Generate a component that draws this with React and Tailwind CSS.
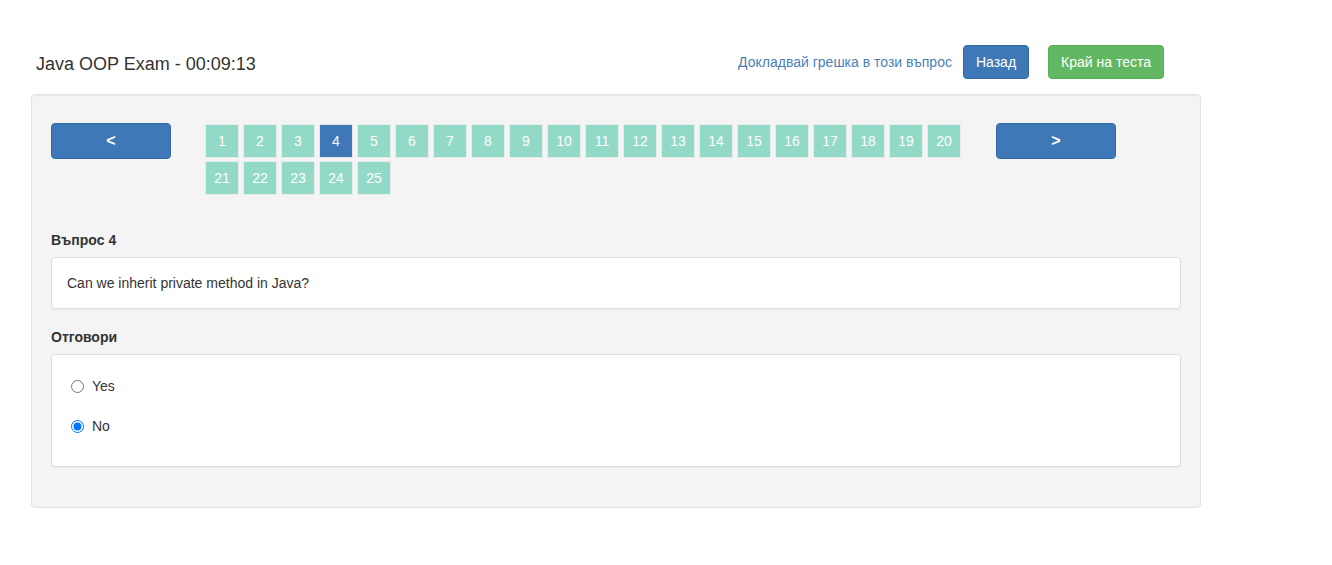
import React, { useState } from 'react';

const font = { fontFamily: '"Liberation Sans", Arial, Helvetica, sans-serif' };

function App() {
  const [current, setCurrent] = useState(4);
  const [answer, setAnswer] = useState('no');
  const numbers = Array.from({ length: 25 }, (_, i) => i + 1);

  return (
    <div className="min-h-screen bg-white text-[#333] text-[14px]" style={font}>
      <div className="pt-[45px] pl-[31px] w-[1201px]">
        {/* Header */}
        <div className="flex items-center justify-between pr-[37px]">
          <h1 className="pl-[5px] pt-[3px] text-[18px] leading-[20px] text-[#333]">
            Java OOP Exam - 00:09:13
          </h1>
          <div className="flex items-center">
            <a href="#" className="text-[#4a7fb8] text-[14px] leading-[20px] mr-[11px]">
              Докладвай грешка в този въпрос
            </a>
            <button className="h-[34px] px-[12px] rounded-[4px] bg-[#3f78b6] border border-[#2f6aa6] text-white text-[14px] mr-[19px]">
              Назад
            </button>
            <button className="h-[34px] px-[12px] rounded-[4px] bg-[#62b862] border border-[#55ae55] text-white text-[14px]">
              Край на теста
            </button>
          </div>
        </div>

        {/* Panel */}
        <div className="mt-[15px] bg-[#f4f4f4] border border-[#e3e3e3] rounded-[4px] shadow-[inset_0_1px_1px_rgba(0,0,0,0.05)] px-[19px] pt-[28px] pb-[40px]">
          <div className="flex items-start">
            <button
              onClick={() => setCurrent(Math.max(1, current - 1))}
              className="w-[120px] h-[36px] rounded-[4px] bg-[#3f78b6] border border-[#2f6aa6] text-white font-bold text-[16px]"
            >
              &lt;
            </button>
            <div className="ml-[34px] w-[756px] flex flex-wrap gap-x-[4px] gap-y-[3px] pt-[1px]">
              {numbers.map((n) => (
                <button
                  key={n}
                  onClick={() => setCurrent(n)}
                  className={`w-[34px] h-[34px] border flex items-center justify-center text-white text-[14px] ${
                    n === current ? 'bg-[#3f78b6] border-[#e6e6e6]' : 'bg-[#93d9c8] border-[#e8ece9]'
                  }`}
                >
                  {n}
                </button>
              ))}
            </div>
            <button
              onClick={() => setCurrent(Math.min(25, current + 1))}
              className="ml-[35px] w-[120px] h-[36px] rounded-[4px] bg-[#3f78b6] border border-[#2f6aa6] text-white font-bold text-[16px]"
            >
              &gt;
            </button>
          </div>

          <div className="mt-[35px] font-bold leading-[20px] mb-[7px]">Въпрос {current}</div>
          <div className="bg-white border border-[#dddddd] rounded-[4px] shadow-[0_1px_1px_rgba(0,0,0,0.05)] p-[15px] leading-[20px]">
            Can we inherit private method in Java?
          </div>

          <div className="mt-[18px] font-bold leading-[20px] mb-[7px]">Отговори</div>
          <div className="bg-white border border-[#dddddd] rounded-[4px] shadow-[0_1px_1px_rgba(0,0,0,0.05)] pl-[19px] pt-[21px] pb-[30px] flex flex-col gap-[20px]">
            {[
              { id: 'yes', label: 'Yes' },
              { id: 'no', label: 'No' },
            ].map((o) => (
              <label key={o.id} className="flex items-center h-[20px] leading-[20px] cursor-pointer">
                <input
                  type="radio"
                  name="answer"
                  checked={answer === o.id}
                  onChange={() => setAnswer(o.id)}
                  className="w-[13px] h-[13px] m-0 mr-[8px]"
                />
                {o.label}
              </label>
            ))}
          </div>
        </div>
      </div>
    </div>
  );
}

export default App;
